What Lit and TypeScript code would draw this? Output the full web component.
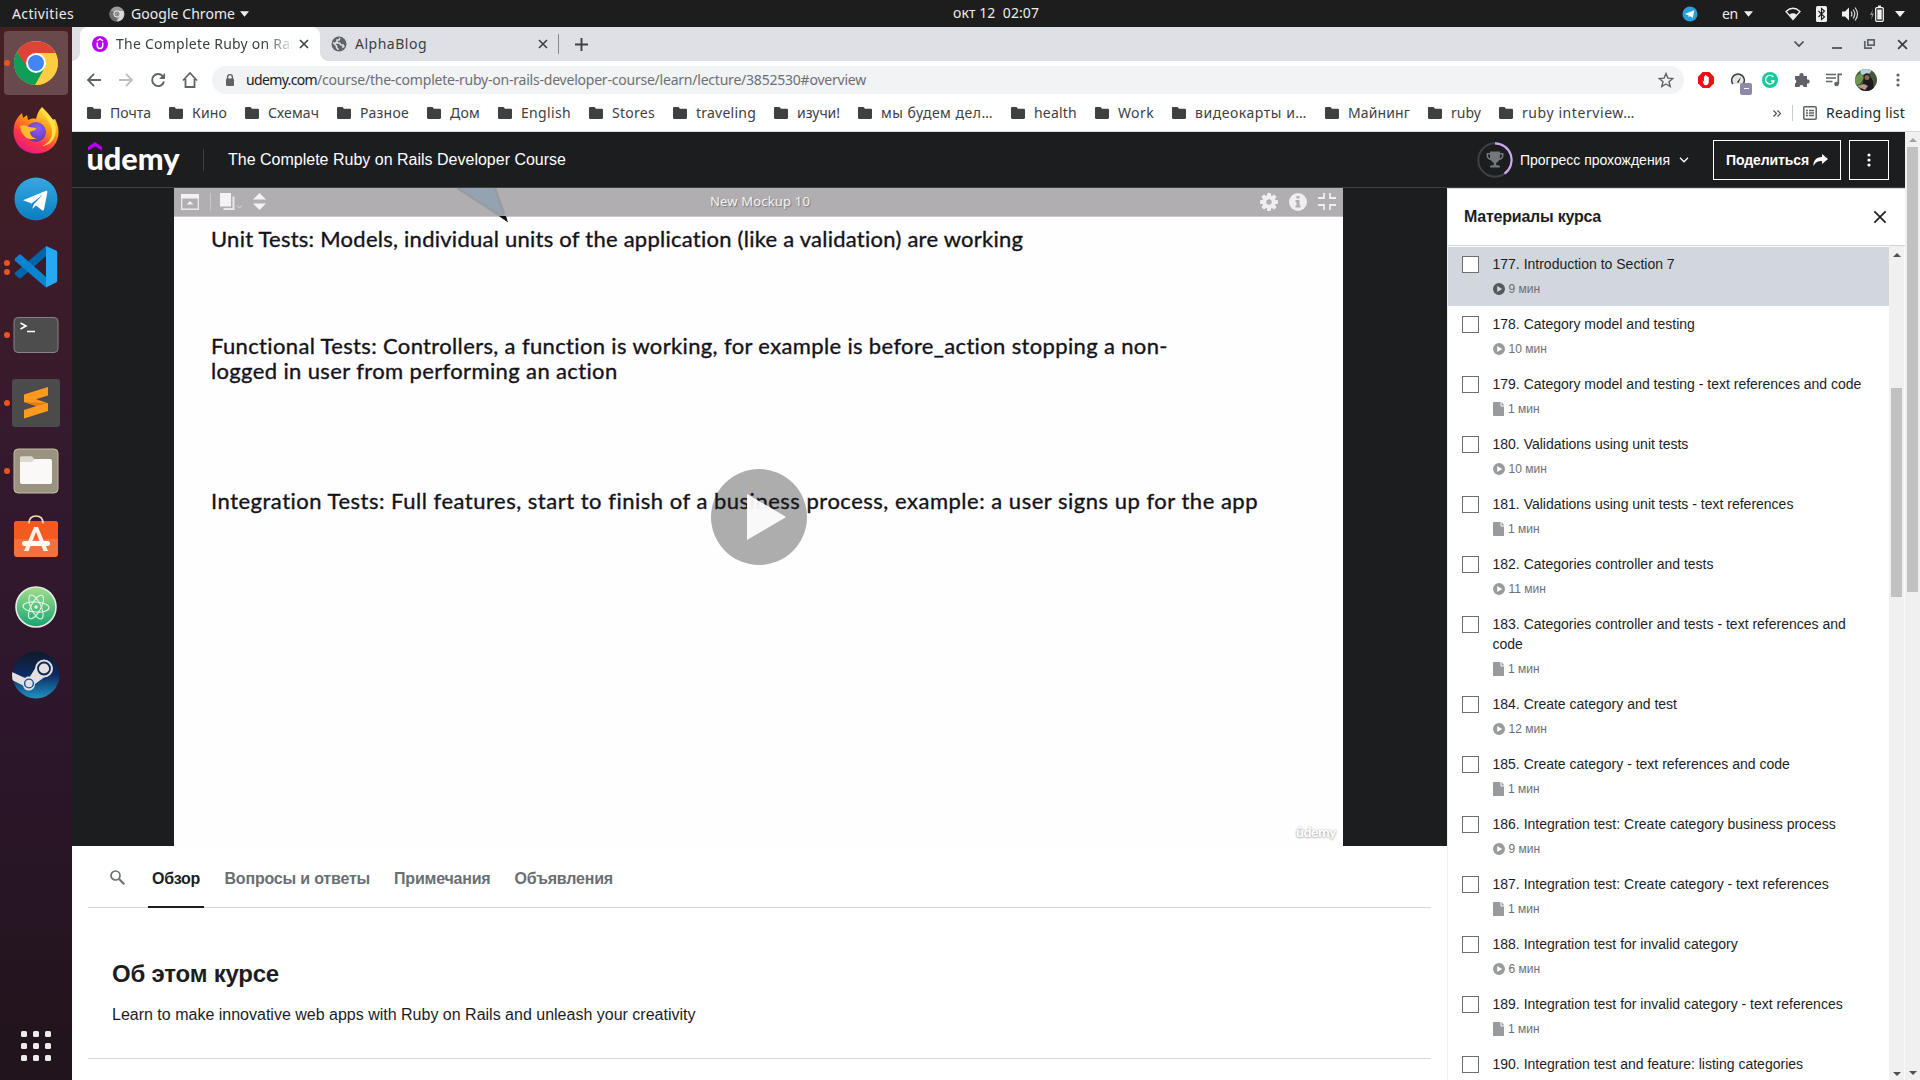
import { LitElement, html, css, svg, nothing } from "lit";
import { customElement, property } from "lit/decorators.js";

/** Inline text whose tracking is adjusted so that it fills a given width. */
@customElement("fit-text")
class FitText extends LitElement {
  @property({ type: Number }) w = 0;
  static styles = css`
    :host { display: inline-block; white-space: pre; flex: none; }
  `;
  render() { return html`<slot></slot>`; }
  firstUpdated() {
    const n = [...(this.textContent ?? "")].length;
    const natural = this.getBoundingClientRect().width;
    if (n && this.w && natural) {
      this.style.letterSpacing = `${(this.w - natural) / n}px`;
      this.style.width = `${this.w}px`;
    }
  }
}

type Lecture = { title: string; min?: string; doc?: boolean; active?: boolean };

const lectures: Lecture[] = [
  { title: "177. Introduction to Section 7", min: "9 мин", active: true },
  { title: "178. Category model and testing", min: "10 мин" },
  { title: "179. Category model and testing - text references and code", min: "1 мин", doc: true },
  { title: "180. Validations using unit tests", min: "10 мин" },
  { title: "181. Validations using unit tests - text references", min: "1 мин", doc: true },
  { title: "182. Categories controller and tests", min: "11 мин" },
  { title: "183. Categories controller and tests - text references and code", min: "1 мин", doc: true },
  { title: "184. Create category and test", min: "12 мин" },
  { title: "185. Create category - text references and code", min: "1 мин", doc: true },
  { title: "186. Integration test: Create category business process", min: "9 мин" },
  { title: "187. Integration test: Create category - text references", min: "1 мин", doc: true },
  { title: "188. Integration test for invalid category", min: "6 мин" },
  { title: "189. Integration test for invalid category - text references", min: "1 мин", doc: true },
  { title: "190. Integration test and feature: listing categories" },
];

const bookmarks: [string, number][] = [
  ["Почта", 41], ["Кино", 35], ["Схемач", 51], ["Разное", 49], ["Дом", 30], ["English", 50],
  ["Stores", 43], ["traveling", 60], ["изучи!", 43], ["мы будем дел…", 112], ["health", 43],
  ["Work", 36], ["видеокарты и…", 112], ["Майнинг", 62], ["ruby", 30], ["ruby interview…", 113],
];

@customElement("lecture-item")
class LectureItem extends LitElement {
  @property({ attribute: false }) item!: Lecture;
  static styles = css`
    :host { display: block; }
    .row { display: flex; box-sizing: border-box; min-height: 60px; border-top: 1px solid transparent;
      padding: 7px 24px 7px 14px; background-clip: padding-box; font: 14px/20px "Liberation Sans", Arial, sans-serif; color: #1c1d1f; }
    .active { background-color: #d1d7dc; }
    .box { flex: none; box-sizing: border-box; width: 17px; height: 17px; margin: 2px 13.5px 0 0; border: 1px solid #6a6f73; background: #fff; }
    .meta { display: flex; align-items: center; gap: 4px; margin-top: 5px; height: 20px; font-size: 12px; color: #6a6f73; }
    .meta svg { display: block; fill: #989a9e; }
    .active .meta svg { fill: #55585c; }
  `;
  render() {
    const { title, min, doc, active } = this.item;
    return html`<div class="row ${active ? "active" : ""}">
      <span class="box"></span>
      <div>
        <div>${title}</div>
        ${min ? html`<div class="meta">
          ${doc
            ? html`<svg width="11.500" height="14" viewBox="0 0 11.500 14"><path d="M1 0h6.500v3.600c0 .5.4.9.9.9h3.100V13a1 1 0 0 1-1 1H1a1 1 0 0 1-1-1V1a1 1 0 0 1 1-1zM8.500 0l3 3.500h-3z"/></svg>`
            : html`<svg width="12" height="12" viewBox="0 0 12 12"><path fill-rule="evenodd" d="M6 0a6 6 0 1 1 0 12A6 6 0 0 1 6 0zM4.200 3v6l5-3z"/></svg>`}
          <span>${min}</span>
        </div>` : nothing}
      </div>
    </div>`;
  }
}

const dockIcons: { art: unknown; dots: number; on?: boolean }[] = [
  { on: true, dots: 1, art: svg`
    <circle cx="24" cy="24" r="22" fill="#ffcd40"/>
    <path d="M4.900 13A22 22 0 0 1 43.400 14L24 14 14.500 29.500z" fill="#db4437"/>
    <path d="M4.900 13A22 22 0 0 0 23.200 46L32.700 29 24 24 14.200 27z" fill="#0f9d58"/>
    <path d="M43.400 14A22 22 0 0 1 23.200 46L32.700 29 31 14z" fill="#ffcd40"/>
    <circle cx="24" cy="24" r="10" fill="#fff"/><circle cx="24" cy="24" r="8" fill="#4285f4"/>` },
  { dots: 0, art: svg`
    <defs>
      <linearGradient id="fx" x1=".8" y1="0" x2=".25" y2="1"><stop offset="0" stop-color="#fff44f"/><stop offset=".4" stop-color="#ff980e"/><stop offset=".7" stop-color="#ff3647"/><stop offset="1" stop-color="#e31587"/></linearGradient>
      <radialGradient id="fp" cx=".6" cy=".3" r=".8"><stop offset="0" stop-color="#9059ff"/><stop offset="1" stop-color="#5b3a9e"/></radialGradient>
    </defs>
    <g transform="translate(0 -1)">
    <path d="M30 1c5 5 8 8 10 13l3-1c2 4 3.500 8 3.500 13C46.500 39 37 47.500 24 47.500S1.500 38 1.500 25c0-6 2-11 5.500-15l3-3 1 5 4-3 1 5c2-1 6-2 8-1 1-5 3-9 6-12z" fill="url(#fx)"/>
    <circle cx="24" cy="26" r="10" fill="url(#fp)"/>
    <path d="M8 20c4-2 7 0 9 1l7 1c1 2-4 3-6 4 0 3 3 7 7 6-8 4-16-2-17-12z" fill="#ffbd2e"/>
    <path d="M30 2c0 8 9 12 10 22 1 8-4 14-10 16 12-1 17-14 12-25C38 9 34 7 30 2z" fill="#ffe14a"/></g>` },
  { dots: 0, art: svg`
    <defs><linearGradient id="tg" x2="0" y2="1"><stop stop-color="#36a9e3"/><stop offset="1" stop-color="#0a7ebd"/></linearGradient></defs>
    <circle cx="24" cy="24" r="21.500" fill="url(#tg)"/>
    <path d="M11 25.300L34 15.800c1-.3 1.600.2 1.300 1.600L32 34.500c-.3 1.200-1.200 1.300-2 .8L24 30.500l-3.500 3.300-.8-5.300z" fill="#fff"/>
    <path d="M19.700 28.500L31 19.500 21.500 29.500l-1 4.300z" fill="#0c82c2"/>` },
  { dots: 2, art: svg`
    <path d="M3 31.500l4 3.700c.6.500 1.200.5 2 0L34 13V3L3.200 29.500c-.7.700-.7 1.300-.2 2z" fill="#0065a9"/>
    <path d="M3 15.500l4-3.700c.6-.5 1.200-.5 2 0L34 34v10.500L3.200 18c-.7-.8-.7-1.500-.2-2.500z" fill="#0a84d0"/>
    <path d="M34 3l10 4.500c.8.400 1.200 1 1.200 2v28c0 1-.4 1.700-1.200 2L34 44.500z" fill="#27a9f1"/>` },
  { dots: 1, art: svg`
    <rect x="2" y="6.500" width="44" height="35" rx="4" fill="#4d4d4d" stroke="#858585"/>
    <path d="M8.500 12l5.500 3-5.500 3M15 20.500h8" fill="none" stroke="#fff" stroke-width="1.600"/>` },
  { dots: 1, art: svg`
    <rect width="48" height="48" rx="3" fill="#4b4b4b"/>
    <path d="M12 15.500L36 8v8.500l-12 3.700 12 4V32l-24 7.500V31l12.500-4L12 23z" fill="#ff9a1f"/>
    <path d="M12 23l12 4 12-3z" fill="#e07c10"/>` },
  { dots: 1, art: svg`
    <rect x="2" y="2" width="44" height="44" rx="4" fill="#9a937f" stroke="#c4bda9"/>
    <path d="M8 14v-3c0-1 .6-1.800 1.800-1.800H20l2.500 3.300H38L40 15v5H8z" fill="#dcd8cd"/>
    <path d="M8 15h12l2.500-3H38c1.200 0 2 .8 2 2v21c0 1.200-.8 2-2 2H10c-1.200 0-2-.8-2-2z" fill="#faf9f8"/>` },
  { dots: 0, art: svg`
    <rect x="2" y="6" width="44" height="36" rx="3" fill="#f4713d"/><path d="M2 9a3 3 0 0 1 3-3h38a3 3 0 0 1 3 3v15H2z" fill="#f25a22"/>
    <path d="M17 8.500C17 3.500 19.500 1 24 1s7 2.500 7 7.500" fill="none" stroke="#f8dca8" stroke-width="1.700"/>
    <path d="M22 12h4l10 24h-4.500l-7.500-19-7.500 19H12z" fill="#fff3ea"/><rect x="10" y="26" width="28" height="5" rx="2.500" fill="#fff"/>` },
  { dots: 0, art: svg`
    <defs><linearGradient id="at" x2="0" y2="1"><stop stop-color="#a5dd8b"/><stop offset="1" stop-color="#14a573"/></linearGradient></defs>
    <circle cx="24" cy="24" r="20" fill="url(#at)" stroke="#e8ece8" stroke-width="1.600"/>
    <g fill="none" stroke="#e4f7e4" stroke-width="1.100"><ellipse cx="24" cy="24" rx="13" ry="5" transform="rotate(4 24 24)"/><ellipse cx="24" cy="24" rx="13" ry="5" transform="rotate(65 24 24)"/><ellipse cx="24" cy="24" rx="13" ry="5" transform="rotate(118 24 24)"/></g>
    <circle cx="24" cy="24" r="1.700" fill="#f4fff4"/>` },
  { dots: 0, art: svg`
    <defs><linearGradient id="st" x2="0" y2="1"><stop stop-color="#0d1a2a"/><stop offset=".5" stop-color="#0d2a60"/><stop offset="1" stop-color="#1e94c4"/></linearGradient>
    <clipPath id="sc"><circle cx="24" cy="24" r="24"/></clipPath></defs>
    <circle cx="24" cy="24" r="23.500" fill="url(#st)"/>
    <g clip-path="url(#sc)"><path d="M0 21l13 6c2-2 4-1.500 5-1.500l5-8a9 9 0 1 1 9 9l-9 6.500c0 4-3 6.500-6 6.500-3.500 0-5.500-2-6-5L0 29z" fill="#e3dfe3"/></g>
    <circle cx="32" cy="17.500" r="6" fill="#e3dfe3" stroke="#13254c" stroke-width="1.800"/><circle cx="17" cy="32.500" r="4.400" fill="none" stroke="#135290" stroke-width="1.400"/>` },
];

const closeX = (s: number, w: number) =>
  html`<svg width="${s}" height="${s}" viewBox="0 0 10 10"><path d="M1 1l8 8M9 1L1 9" fill="none" stroke="currentColor" stroke-width="${w}"/></svg>`;

const telegramMini = html`<svg width="16" height="16" viewBox="0 0 16 16"><circle cx="8" cy="8" r="7.500" fill="#2a9fdc"/><path d="M3 8l9.300-3.700L10.700 12 8 10l-1.300 1.200-.3-2z" fill="#fff"/></svg>`;

@customElement("app-root")
class AppRoot extends LitElement {
  static styles = css`
    :host { display: grid; grid-template: 27px 1053px / 72px 1848px; width: 1920px; height: 1080px; overflow: hidden; background: #fff;
      font: 14px/20px "Liberation Sans", Arial, sans-serif; color: #1c1d1f; }
    svg { display: block; flex: none; overflow: visible; }
    .ui { font-family: "Noto Sans", "Open Sans", sans-serif; }

    .top { grid-column: 1 / 3; display: grid; grid-template-columns: 1fr auto 1fr; align-items: center; background: #1d1d1d; color: #ececec; font-size: 14px; }
    .top-left { display: flex; align-items: center; padding-left: 12px; }
    .top-left svg:first-of-type { margin: 0 6px 0 35px; }
    .top-left svg:last-of-type { margin-left: 5px; }
    .clock { display: flex; margin-left: 72px; padding-bottom: 1px; }
    .tray { display: flex; align-items: center; justify-content: flex-end; padding-right: 15px; }
    .lang { margin: 0 6px 0 24px; }
    .wifi { margin: 0 15px 0 32px; } .bt { margin-right: 15px; } .snd { margin-right: 12px; } .bat { margin-right: 11px; }

    .dock { display: flex; flex-direction: column; padding-top: 2px; background: linear-gradient(#452023 0, #3d1c28 22%, #34192e 42%, #2d162b 65%, #22141d 96%, #21141c 100%); }
    .app { display: grid; grid-template-columns: 7px 1fr; align-items: center; height: 64px; margin: 2px 4px; border-radius: 4px; box-sizing: border-box; }
    .app.on { background: #6a494c; }
    .dots { display: flex; flex-direction: column; gap: 3px; }
    .dots i { display: block; width: 6px; height: 6px; border-radius: 50%; background: #e95420; }
    .app svg { margin-left: 1px; }
    .grid { display: grid; grid-template-columns: repeat(3, 6px); gap: 6px; margin: auto 0 19px 21px; }
    .grid i { height: 6px; border-radius: 1.500px; background: #eeeceb; }

    .window { display: grid; grid-template-rows: 34px 37px 34px 948px; min-width: 0; }
    .tabs { display: flex; align-items: center; background: #dee0e5; color: #3c4043; }
    .tab { position: relative; display: flex; align-items: center; box-sizing: border-box; width: 240px; height: 34px; margin-left: 8px; padding: 0 11px 0 12px; background: #fff; border-radius: 8px 8px 0 0; }
    .tab::before, .tab::after { content: ""; position: absolute; bottom: 0; width: 8px; height: 8px; }
    .tab::before { left: -8px; background: radial-gradient(circle at 0 0, transparent 7.500px, #fff 8px); }
    .tab::after { right: -8px; background: radial-gradient(circle at 100% 0, transparent 7.500px, #fff 8px); }
    .tab-title { flex: none; width: 176px; margin-left: 8px; overflow: hidden; mask-image: linear-gradient(90deg, #000 150px, transparent 178px); }
    .tab > svg:last-child, .tab2 > svg:last-child { margin-left: auto; }
    .tab2 { display: flex; align-items: center; box-sizing: border-box; width: 239px; height: 20px; padding: 0 10px 0 11px; border-right: 1px solid #85888d; }
    .tab2 fit-text { margin-left: 8px; }
    .plus { margin-left: 16px; }
    .win { display: flex; align-items: center; margin-left: auto; padding-right: 12px; }
    .w-search { margin-right: 28px; }
    .w-ctl { margin-right: 22px; }

    .tools { display: flex; align-items: center; padding: 0 6px; color: #5f6368; }
    .slot { flex: none; display: grid; place-items: center; width: 32px; height: 32px; }
    .omni { flex: 1; display: flex; align-items: center; height: 28px; margin: 0 6px; border-radius: 14px; background: #f1f3f4; color: #6c7075; font-size: 14px; }
    .omni svg:first-child { margin: 0 10px 0 12px; }
    .omni svg:last-child { margin: 0 10px 0 auto; }
    .host { color: #202124; }
    .badge { position: absolute; right: -7px; bottom: -8px; width: 12px; height: 12px; border-radius: 2px; background: #8d89a6; display: grid; place-items: center; }
    .badge::after { content: ""; width: 5px; height: 1.500px; background: #fff; }
    .gauge { position: relative; }

    .marks { display: flex; align-items: center; box-sizing: border-box; padding: 0 0 3px 15px; border-bottom: 1px solid #d5d8db; color: #3c4043; font-size: 14px; }
    .mark { display: flex; align-items: center; gap: 9px; margin-right: 18px; }
    .more { margin-left: auto; display: flex; align-items: center; padding-right: 15px; }
    .more .bar { width: 1px; height: 16px; margin: 0 10px 0 11px; background: #c9ccd0; }
    .more fit-text { margin-left: 9px; color: #26282b; }

    .page { display: grid; grid-template-columns: 1833px 15px; }
    .view { display: grid; grid-template: 56px 892px / 1375px 458px; }
    .header { grid-column: 1 / 3; display: flex; align-items: center; box-sizing: border-box; border-bottom: 1px solid #3e4143; padding: 0 16px; background: #1c1d1f; color: #fff; }
    .logo { display: grid; height: 56px; width: 92px; }
    .logo text { font: 900 31px Lato, sans-serif; fill: #fff; }
    .rule { width: 1px; height: 22px; margin: 0 24px 0 23px; background: #3e4143; }
    .course { font-size: 16px; }
    .progress { display: flex; align-items: center; margin-left: auto; }
    .progress fit-text { margin: 0 9px 0 7px; }
    .btn { box-sizing: border-box; height: 40px; border: 1px solid #fff; display: flex; align-items: center; font-weight: 700; padding: 0 12px; gap: 4px; }
    .share { width: 128px; margin-left: 24px; }
    .dots3 { width: 40px; margin-left: 8px; padding: 0; justify-content: center; }

    .main { display: flex; flex-direction: column; min-width: 0; }
    .player { display: flex; justify-content: center; height: 658px; background: #1c1d1f; }
    .video { position: relative; width: 1169px; margin-right: 2px; background: #fefdff; overflow: hidden; }
    .vbar { display: flex; align-items: center; box-sizing: border-box; height: 29px; padding: 0 7px 1px 7px; background: #b1aeb1; color: #f4f2f4; border-bottom: 1px solid #c9c7c9; }
    .vbar .sep { width: 1px; height: 18px; margin: 0 9px 0 11px; background: #c9c7c9; }
    .v-sort { margin-left: 10px; }
    .vname { margin: -2px auto 0 444px; font-size: 13px; text-shadow: 1px 1px 1px #777; }
    .vend { display: flex; gap: 11px; align-items: center; }
    .cone { position: absolute; left: 282px; top: 0; }
    .notes { padding-left: 37px; font: 400 22px/25px "Lato", sans-serif; color: #141318; -webkit-text-stroke: .35px #141318; }
    .notes p { margin: 0; display: flex; flex-direction: column; align-items: flex-start; }
    .n1 { padding-top: 9px; } .n2 { padding-top: 82px; } .n3 { padding-top: 105px; }
    .play { position: absolute; left: 537px; top: 281px; }
    .wm { position: absolute; right: 7px; bottom: 4px; font: 700 14px/20px Lato, sans-serif; color: #fff; text-shadow: 0 0 2px #aaa, 0 1px 2px #bbb; }

    .nav { display: flex; align-items: stretch; height: 61px; margin: 0 16px; border-bottom: 1px solid #d1d7dc; font: 700 16px/20px "Liberation Sans", Arial, sans-serif; color: #6a6f73; }
    .nav > svg { margin: 23.500px 22px 0; }
    .nav > fit-text { padding-top: 23px; margin: 0 12px; }
    .nav .cur { color: #1c1d1f; border-bottom: 2px solid #1c1d1f; height: 37px; margin: 0 8.500px 0 1px; padding: 23px 4px 0; z-index: 1; }
    .about { height: 151px; box-sizing: border-box; margin: 0 16px; padding: 49px 24px 0; border-bottom: 1px solid #d1d7dc; }
    .about h2 { margin: 0 0 13px; font-size: 24px; line-height: 34px; }
    .about p { margin: 0; font-size: 16px; line-height: 22px; }

    .side { display: flex; flex-direction: column; min-width: 0; border-left: 1px solid #eceef0; border-top: 1px solid #d1d7dc; background: #fff; }
    .side-head { flex: none; display: flex; align-items: center; justify-content: space-between; box-sizing: border-box; height: 57px; padding: 0 18px 0 16px; border-bottom: 1px solid #d1d7dc; font-weight: 700; font-size: 16px; }
    .side-head svg { margin-top: -1px; }
    .side-body { display: grid; grid-template-columns: 441px 16px; height: 834px; }
    .list { overflow: hidden; }
    .sb { display: flex; flex-direction: column; align-items: center; background: #f0f0f0; border-right: 1px solid #fafafa; box-sizing: border-box; }
    .thumb { width: 11px; background: #c1c1c1; }
    .sb svg:last-child { margin-top: auto; }
    .sb-in { padding: 7px 0 4px; } .sb-in .thumb { height: 209px; margin-top: 131px; }
    .sb-out { padding: 6px 0 5px; border: 0; } .sb-out .thumb { height: 445px; margin-top: 5px; }
  `;

  private arrow(up: boolean, c: string) {
    return html`<svg width="8" height="4" viewBox="0 0 8 4"><path d="${up ? "M0 4l4-4 4 4z" : "M0 0h8L4 4z"}" fill="${c}"/></svg>`;
  }

  private tri(w: number) {
    return html`<svg width="${w}" height="6" viewBox="0 0 10 6"><path d="M0 0h10L5 6z" fill="#f0f0f0"/></svg>`;
  }

  private renderTop() {
    return html`<div class="top ui">
      <div class="top-left">
        <fit-text w="62">Activities</fit-text>
        <svg width="16" height="16" viewBox="0 0 16 16"><circle cx="8" cy="8" r="7.500" fill="#9a9a9a"/><path d="M1.500 4A7.500 7.500 0 0 0 7 15.500L10 9z" fill="#6c6c6c"/><path d="M14.500 5H8l3 5-3 5.500A7.500 7.500 0 0 0 14.500 5z" fill="#d8d8d8"/><circle cx="8" cy="8" r="3.200" fill="#8f8f8f" stroke="#f0f0f0"/></svg>
        <fit-text w="104">Google Chrome</fit-text>
        ${this.tri(9)}
      </div>
      <div class="clock"><fit-text w="86">окт 12  02:07</fit-text></div>
      <div class="tray">
        ${telegramMini}
        <fit-text class="lang" w="16">en</fit-text>${this.tri(9)}
        <svg class="wifi" width="16" height="14" viewBox="0 0 16 14"><path d="M1 4.500Q8-2 15 4.500L8 12.500z" fill="none" stroke="#f0f0f0" stroke-width="1.300"/><path d="M4.500 7.500Q8 5 11.500 7.500L8 12.500z" fill="#f0f0f0"/></svg>
        <svg class="bt" width="11" height="16" viewBox="0 0 11 16"><rect width="11" height="16" rx="1.500" fill="#f0f0f0"/><path d="M2.500 5l6 6-3 2.500v-11l3 2.500-6 6" fill="none" stroke="#1d1d1d" stroke-width="1.100"/></svg>
        <svg class="snd" width="16" height="16" viewBox="0 0 16 16"><path d="M0 5.500h3l4-4v13l-4-4H0z" fill="#f0f0f0"/><path d="M9 5.500q2 2.500 0 5M11 3.500q3.500 4.500 0 9M13 1.500q5 6.500 0 13" fill="none" stroke="#d8d8d8" stroke-width="1.200"/></svg>
        <svg class="bat" width="14" height="18" viewBox="0 0 14 18"><path d="M3 4L0 10h2l-1 5 3-6.500H2z" fill="#8c8c8c"/><rect x="5.700" y="2.700" width="7.600" height="13.600" rx="1" fill="none" stroke="#f0f0f0" stroke-width="1.300"/><path d="M8 .5h3v2H8zM7.300 4.500h4.400v10H7.300z" fill="#f0f0f0"/></svg>
        ${this.tri(10)}
      </div>
    </div>`;
  }

  private renderDock() {
    return html`<div class="dock">
      ${dockIcons.map((d) => html`<div class="app ${d.on ? "on" : ""}">
        <span class="dots">${Array.from({ length: d.dots }, () => html`<i></i>`)}</span>
        <svg width="48" height="48" viewBox="0 0 48 48">${d.art}</svg>
      </div>`)}
      <div class="grid">${Array.from({ length: 9 }, () => html`<i></i>`)}</div>
    </div>`;
  }

  private renderChrome() {
    return html`
      <div class="tabs ui">
        <div class="tab">
          <svg width="16" height="16" viewBox="0 0 16 16"><circle cx="8" cy="8" r="8" fill="#b900f5"/><path d="M5 5l3-2 3 2M5.300 6.500v3.200a2.700 2.700 0 0 0 5.400 0V6.500" fill="none" stroke="#fff" stroke-width="1.500"/></svg>
          <span class="tab-title"><fit-text w="189">The Complete Ruby on Rails</fit-text></span>
          ${closeX(10, 1.600)}
        </div>
        <div class="tab2">
          <svg width="16" height="16" viewBox="0 0 16 16"><circle cx="8" cy="8" r="7.500" fill="#5f6368"/><path d="M2 6.500l3.500 3.500v1.500l2 2.300M9 2l-1 2H6v2L4.500 7h4l1.500 2h2v2l1.500-1" fill="none" stroke="#dee0e5" stroke-width="1.600"/></svg>
          <fit-text w="72">AlphaBlog</fit-text>
          ${closeX(10, 1.600)}
        </div>
        <svg class="plus" width="13" height="13" viewBox="0 0 13 13"><path d="M6.500 0v13M0 6.500h13" stroke="#3c4043" stroke-width="1.900"/></svg>
        <div class="win">
          <svg class="w-search" width="10" height="6" viewBox="0 0 10 6"><path d="M.5.500L5 5 9.500.500" fill="none" stroke="#4a4d51" stroke-width="1.700"/></svg>
          <svg class="w-ctl" width="10" height="10" viewBox="0 0 10 10"><path d="M0 9h10" stroke="#5f6368" stroke-width="2"/></svg>
          <svg class="w-ctl" width="11" height="10" viewBox="0 0 11 10"><path d="M3.800.800h6.400v5.400H3.800zM.800 2v7.200H8" fill="none" stroke="#5f6368" stroke-width="1.700"/></svg>
          ${closeX(11, 1.600)}
        </div>
      </div>
      <div class="tools ui">
        <span class="slot"><svg width="14" height="14" viewBox="0 0 14 14"><path d="M14 7H1.500M7 .800L1 7l6 6.200" fill="none" stroke="#5f6368" stroke-width="1.800"/></svg></span>
        <span class="slot"><svg width="14" height="14" viewBox="0 0 14 14"><path d="M0 7h12.500M7 .800L13 7l-6 6.200" fill="none" stroke="#bcbec1" stroke-width="1.800"/></svg></span>
        <span class="slot"><svg width="14" height="14" viewBox="0 0 14 14"><path d="M12 3.500A6 6 0 1 0 13 8.500" fill="none" stroke="#5f6368" stroke-width="1.900"/><path d="M14 0v6H8z" fill="#5f6368"/></svg></span>
        <span class="slot"><svg width="16" height="16" viewBox="0 0 16 16"><path d="M1 8.500L8 1l7 7.500M3.500 7v8h9V7" fill="none" stroke="#5f6368" stroke-width="1.800"/></svg></span>
        <div class="omni">
          <svg width="12" height="12" viewBox="0 0 12 12"><rect x="2" y="4.500" width="8" height="7.500" rx="1" fill="#5f6368"/><path d="M3.600 5V3a2.400 2.400 0 0 1 4.800 0v2" fill="none" stroke="#5f6368" stroke-width="1.400"/></svg>
          <fit-text class="host" w="71">udemy.com</fit-text><fit-text w="549">/course/the-complete-ruby-on-rails-developer-course/learn/lecture/3852530#overview</fit-text>
          <svg width="16" height="16" viewBox="0 0 16 16"><path d="M8 1.500l1.900 4.600 4.800.4-3.700 3.200 1.200 4.800L8 12l-4.200 2.500L5 9.700 1.300 6.500l4.800-.4z" fill="none" stroke="#5f6368" stroke-width="1.400"/></svg>
        </div>
        <span class="slot"><svg width="16" height="16" viewBox="0 0 16 16"><path d="M4.700 0h6.600L16 4.700v6.600L11.300 16H4.700L0 11.300V4.700z" fill="#f40d12"/><path d="M4.600 8.500l1.400 1V4.300h1V3h1.300v1H9.500v1h1.300v5c0 2-1.300 3.200-3 3.200-2 0-2.700-1.700-3.200-4.700z" fill="#fff"/></svg></span>
        <span class="slot"><span class="gauge"><svg width="14" height="14" viewBox="0 0 14 14"><path d="M1.800 11A6.300 6.300 0 1 1 12.200 11" fill="#e6e6e6" stroke="#3c4043" stroke-width="1.600"/><path d="M6 9l4-5-2.500 6z" fill="#222"/></svg><span class="badge"></span></span></span>
        <span class="slot"><svg width="16" height="16" viewBox="0 0 16 16"><circle cx="8" cy="8" r="8" fill="#11cc9a"/><path d="M11.300 5A4.300 4.300 0 1 0 12 9H9" fill="none" stroke="#fff" stroke-width="1.400"/></svg></span>
        <span class="slot"><svg width="16" height="16" viewBox="0 0 16 16"><path d="M1 4h4.500a2.200 2.200 0 1 1 4 0H13v3.500a2.100 2.100 0 1 1 0 4V15H9.500a2 2 0 1 0-4 0H1v-3.500a2.200 2.200 0 0 0 0-4z" fill="#5f6368"/></svg></span>
        <span class="slot"><svg width="16" height="14" viewBox="0 0 16 14"><path d="M0 1.500h10M0 5h10M0 8.500h6.500M12.300 11V1.300H16" fill="none" stroke="#5f6368" stroke-width="1.700"/><circle cx="10.500" cy="11" r="2.300" fill="#5f6368"/></svg></span>
        <span class="slot"><svg width="22" height="22" viewBox="0 0 22 22"><defs><clipPath id="av"><circle cx="11" cy="11" r="11"/></clipPath></defs><g clip-path="url(#av)"><path d="M0 0h22v22H0z" fill="#46573a"/><path d="M5 0h13l-4 5-8 1z" fill="#b9cfd6"/><path d="M0 8l6-4 3 5-4 6-5 1z" fill="#6d9650"/><path d="M9 6c2-3 6-2 6 1l3 5 1 10H5l3-8z" fill="#1d1a1c"/><circle cx="12" cy="8.500" r="2.500" fill="#8a6653"/><path d="M2 17l7-2 4 2-3 4z" fill="#b49a89"/></g></svg></span>
        <span class="slot"><svg width="4" height="14" viewBox="0 0 4 14" fill="#5f6368"><circle cx="2" cy="2" r="1.600"/><circle cx="2" cy="7" r="1.600"/><circle cx="2" cy="12" r="1.600"/></svg></span>
      </div>
      <div class="marks ui">
        ${bookmarks.map(([t, w]) => html`<span class="mark">
          <svg width="14" height="12" viewBox="0 0 14 12"><path d="M1.200 0H5.500L7 1.700h5.800c.7 0 1.200.5 1.200 1.200v7.900c0 .7-.5 1.200-1.200 1.200H1.200C.5 12 0 11.500 0 10.800V1.200C0 .5.5 0 1.200 0z" fill="#3f4042"/></svg>
          <fit-text w="${w}">${t}</fit-text></span>`)}
        <div class="more">
          <svg width="8" height="7" viewBox="0 0 8 7"><path d="M.5.500l3 3-3 3M4.500.500l3 3-3 3" fill="none" stroke="#4a4d51" stroke-width="1.200"/></svg>
          <span class="bar"></span>
          <svg width="14" height="14" viewBox="0 0 14 14"><rect x=".8" y=".8" width="12.400" height="12.400" rx="1" fill="none" stroke="#5f6368" stroke-width="1.500"/><path d="M3 4.500h2M6 4.500h5M3 7h2M6 7h5M3 9.500h2M6 9.500h5" stroke="#5f6368" stroke-width="1.300"/></svg>
          <fit-text w="79">Reading list</fit-text>
        </div>
      </div>`;
  }

  private renderHeader() {
    return html`<div class="header">
      <div class="logo"><svg width="92" height="55" viewBox="0 0 92 55">
        <path d="M0 15L7 10l7 5v3.800l-7-4.500-7 4.500z" fill="#b900f5"/>
        <text x="-1.500" y="38" textLength="93" lengthAdjust="spacingAndGlyphs">udemy</text></svg></div>
      <span class="rule"></span>
      <fit-text class="course" w="338">The Complete Ruby on Rails Developer Course</fit-text>
      <div class="progress">
        <svg width="36" height="36" viewBox="0 0 36 36"><circle cx="18" cy="18" r="16.700" fill="none" stroke="#3e4143" stroke-width="2"/><path d="M18 1.300A16.700 16.700 0 0 1 27.500 31.700" fill="none" stroke="#cda5f3" stroke-width="2.200"/>
          <path d="M13 9.500h10v1.600h3.500v2.400c0 2.800-2 4.300-4.300 4.600-.8 1.600-1.900 2.400-3 2.700v2.400h2c1 0 1.800.8 1.800 2.300h-10c0-1.500.8-2.300 1.800-2.300h2v-2.400c-1.100-.3-2.200-1.100-3-2.700-2.300-.3-4.300-1.800-4.300-4.600v-2.400H13zm-2 3v1c0 1.500.8 2.400 2.200 2.800-.2-1.200-.3-2.400-.3-3.800zm12 0c0 1.400 0 2.600-.3 3.800 1.400-.4 2.200-1.300 2.200-2.800v-1z" fill="#73787c"/></svg>
        <fit-text w="150">Прогресс прохождения</fit-text>
        <svg width="10" height="6" viewBox="0 0 10 6"><path d="M1 .8L5 4.800 9 .8" fill="none" stroke="#fff" stroke-width="1.300"/></svg>
      </div>
      <div class="btn share"><fit-text w="83">Поделиться</fit-text><svg width="15" height="12" viewBox="0 0 15 12"><path d="M9 0l6 5-6 5V7C5 7 2.500 8 .5 12 0 7 3 3.200 9 3z" fill="#fff"/></svg></div>
      <div class="btn dots3"><svg width="4" height="14" viewBox="0 0 4 14" fill="#fff"><circle cx="2" cy="2" r="1.600"/><circle cx="2" cy="7" r="1.600"/><circle cx="2" cy="12" r="1.600"/></svg></div>
    </div>`;
  }

  private renderVideo() {
    const teeth = [0, 45, 90, 135];
    return html`<div class="player"><div class="video">
      <div class="vbar">
        <svg width="18" height="16" viewBox="0 0 18 16"><path d="M.7.700h16.600v14.600H.7z" fill="none" stroke="#e9e7e9" stroke-width="1.400"/><path d="M0 0h18v4.500H0zM5.500 10.500L9 7l3.500 3.500z" fill="#f4f2f4"/></svg>
        <span class="sep"></span>
        <svg width="23" height="17" viewBox="0 0 23 17"><path d="M0 0h11v13.500H0z" fill="#f4f2f4"/><path d="M13.500 3.500V16H3.500" fill="none" stroke="#e9e7e9" stroke-width="2"/><path d="M17 12.500l2.500 2.500 2.500-2.500" fill="none" stroke="#dedcde"/></svg>
        <svg class="v-sort" width="13" height="17" viewBox="0 0 13 17"><path d="M0 6.500L6.500 0 13 6.500zM0 10.500L6.500 17 13 10.500z" fill="#f4f2f4"/></svg>
        <fit-text class="vname ui" w="100">New Mockup 10</fit-text>
        <div class="vend">
          <svg width="18" height="18" viewBox="0 0 18 18">${teeth.map((a) => svg`<rect x="7" y="0" width="4" height="18" rx="1" fill="#f0eef0" transform="rotate(${a} 9 9)"/>`)}<circle cx="9" cy="9" r="4.700" fill="#b1aeb1" stroke="#f0eef0" stroke-width="4"/></svg>
          <svg width="18" height="18" viewBox="0 0 18 18"><circle cx="9" cy="9" r="9" fill="#f0eef0"/><path d="M7.500 3h3v2.500h-3zM6.500 7h4v5.500h1V14.500h-5v-2h1V9h-1z" fill="#b1aeb1"/></svg>
          <svg width="18" height="17" viewBox="0 0 18 17"><path d="M6 0v5H0M12 0v5h6M6 17v-5H0M12 17v-5h6" fill="none" stroke="#f0eef0" stroke-width="1.800"/></svg>
        </div>
      </div>
      <svg class="cone" width="54" height="36" viewBox="0 0 54 36"><path d="M1 0L50 32 39 0z" fill="#94a3b2"/><path d="M1 0L48 30M39 0l9 26" stroke="#9b9a9f" stroke-width="2.500" fill="none"/><path d="M43 28h7l2 6.500z" fill="#111"/></svg>
      <div class="notes">
        <p class="n1"><fit-text w="813">Unit Tests: Models, individual units of the application (like a validation) are working</fit-text></p>
        <p class="n2"><fit-text w="958">Functional Tests: Controllers, a function is working, for example is before_action stopping a non-</fit-text>
          <fit-text w="407">logged in user from performing an action</fit-text></p>
        <p class="n3"><fit-text w="1047">Integration Tests: Full features, start to finish of a business process, example: a user signs up for the app</fit-text></p>
      </div>
      <svg class="play" width="96" height="96" viewBox="0 0 96 96"><circle cx="48" cy="48" r="48" fill="#1e1e1f" fill-opacity=".36"/><path d="M36 25l38 22.300c.7.400.7 1 0 1.400L36 71z" fill="#fff" fill-opacity=".93"/></svg>
      <fit-text class="wm" w="40">ûdemy</fit-text>
    </div></div>`;
  }

  render() {
    return html`
      ${this.renderTop()}
      ${this.renderDock()}
      <div class="window">
        ${this.renderChrome()}
        <div class="page">
          <div class="view">
            ${this.renderHeader()}
            <div class="main">
              ${this.renderVideo()}
              <div class="nav">
                <svg width="15" height="15" viewBox="0 0 15 15"><circle cx="5.500" cy="5.500" r="4.500" fill="none" stroke="#6a6f73" stroke-width="1.700"/><path d="M9 9l5.300 5.300" stroke="#6a6f73" stroke-width="2"/></svg>
                <span class="cur"><fit-text w="48">Обзор</fit-text></span>
                <fit-text w="145.500">Вопросы и ответы</fit-text>
                <fit-text w="96.500">Примечания</fit-text>
                <fit-text w="98.500">Объявления</fit-text>
              </div>
              <div class="about">
                <h2><fit-text w="167">Об этом курсе</fit-text></h2>
                <p>Learn to make innovative web apps with Ruby on Rails and unleash your creativity</p>
              </div>
            </div>
            <div class="side">
              <div class="side-head"><fit-text w="137">Материалы курса</fit-text>${closeX(14, 1.200)}</div>
              <div class="side-body">
                <div class="list">${lectures.map((l) => html`<lecture-item .item=${l}></lecture-item>`)}</div>
                <div class="sb sb-in">${this.arrow(true, "#505050")}<span class="thumb"></span>${this.arrow(false, "#505050")}</div>
              </div>
            </div>
          </div>
          <div class="sb sb-out">${this.arrow(true, "#a3a3a3")}<span class="thumb"></span>${this.arrow(false, "#505050")}</div>
        </div>
      </div>`;
  }
}
